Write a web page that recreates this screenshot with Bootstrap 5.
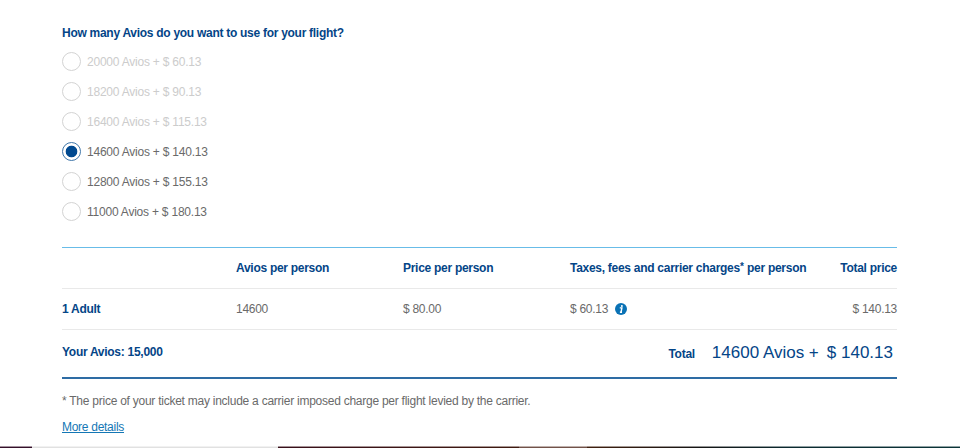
<!DOCTYPE html>
<html lang="en">
<head>
<meta charset="utf-8">
<meta name="viewport" content="width=device-width, initial-scale=1">
<title>Avios flight payment</title>
<link href="https://cdn.jsdelivr.net/npm/bootstrap@5.3.0/dist/css/bootstrap.min.css" rel="stylesheet">
<style>
body{font-family:"Liberation Sans",Arial,sans-serif;font-size:12px;letter-spacing:-.28px;line-height:18px;color:#6a6a6a;background:#fff;height:448px;overflow:hidden}
.booking{width:835px;margin-left:62px;padding-top:24px;flex:1}
.navy{color:#044587}
.question{font-size:12px;line-height:18px;margin:0 0 5px}
.option{height:30px;gap:6px;letter-spacing:-.22px}
.option .form-check-input{width:19px;height:19px;margin:0 0 1px;border:1px solid #d3d3d3;box-shadow:none;background-image:none;opacity:1}
.option .form-check-input:checked{border-color:#3f76a9;background:#fff radial-gradient(circle,#004990 5.4px,#fff 6.2px)}
.option.off{color:#ccc}
.fare{margin-top:20px;border-top:1px solid #68bce8;border-bottom:2px solid #2e6ca4}
.fare-row{display:grid;grid-template-columns:174px 167px 167px 1fr auto;height:41px;border-bottom:1px solid #e9e9e9;align-items:center}
.fare-total{height:47px}
.fare-total>b{margin-top:-3px}
.grand{font-size:17px;letter-spacing:0}
.tot{margin-right:17px}
.usd{margin:0 4px 0 8px}
.info{gap:7px}
.ast{font-size:10px;line-height:1;vertical-align:2px;letter-spacing:.2px}
.note{margin-top:13px;letter-spacing:-.25px}
.link{display:inline-block;margin-top:8px;color:#1477b5;text-decoration:underline}
.strip{height:2px;background:linear-gradient(90deg,#35102a 32px,#e1e1e1 32px 278px,#39101b 278px,#3f1a10 519px,#725249 519px 587px,#42200f 587px,#151515 700px,#0b2a30 790px,#0b3438)}
.strip::before{content:"";display:block;height:1px;background:rgba(255,255,255,.55)}
</style>
<script src="https://cdn.jsdelivr.net/npm/bootstrap@5.3.0/dist/js/bootstrap.bundle.min.js"></script>
</head>
<body class="d-flex flex-column">
<main class="booking">
  <h1 class="question navy fw-bold">How many Avios do you want to use for your flight?</h1>
  <form>
    <label class="option off d-flex align-items-center"><input class="form-check-input" type="radio" name="avios" disabled><span>20000 Avios + $ 60.13</span></label>
    <label class="option off d-flex align-items-center"><input class="form-check-input" type="radio" name="avios" disabled><span>18200 Avios + $ 90.13</span></label>
    <label class="option off d-flex align-items-center"><input class="form-check-input" type="radio" name="avios" disabled><span>16400 Avios + $ 115.13</span></label>
    <label class="option d-flex align-items-center"><input class="form-check-input" type="radio" name="avios" checked><span>14600 Avios + $ 140.13</span></label>
    <label class="option d-flex align-items-center"><input class="form-check-input" type="radio" name="avios"><span>12800 Avios + $ 155.13</span></label>
    <label class="option d-flex align-items-center"><input class="form-check-input" type="radio" name="avios"><span>11000 Avios + $ 180.13</span></label>
  </form>
  <section class="fare">
    <div class="fare-row navy fw-bold"><span></span><span>Avios per person</span><span>Price per person</span><span>Taxes, fees and carrier charges<span class="ast">*</span> per person</span><span>Total price</span></div>
    <div class="fare-row"><span class="navy fw-bold">1 Adult</span><span>14600</span><span>$ 80.00</span>
      <span class="info d-flex align-items-center">$ 60.13
        <svg width="12" height="12" viewBox="0 0 12 12" aria-label="Information"><circle cx="6" cy="6" r="6" fill="#0a72b5"/><circle cx="6.9" cy="2.9" r="1" fill="#fff"/><path d="M4.8 4.9h2.1L6 9.3h1M6 9.3H4.9" fill="none" stroke="#fff" stroke-width="1.4"/></svg>
      </span><span>$ 140.13</span></div>
    <div class="fare-total d-flex justify-content-between align-items-center navy"><b>Your Avios: 15,000</b>
      <div class="d-flex align-items-baseline"><b class="tot">Total</b><span class="grand">14600 Avios +</span><span class="grand usd">$ 140.13</span></div></div>
  </section>
  <p class="note mb-0">* The price of your ticket may include a carrier imposed charge per flight levied by the carrier.</p>
  <a href="#" class="link">More details</a>
</main>
<div class="strip"></div>
</body>
</html>
